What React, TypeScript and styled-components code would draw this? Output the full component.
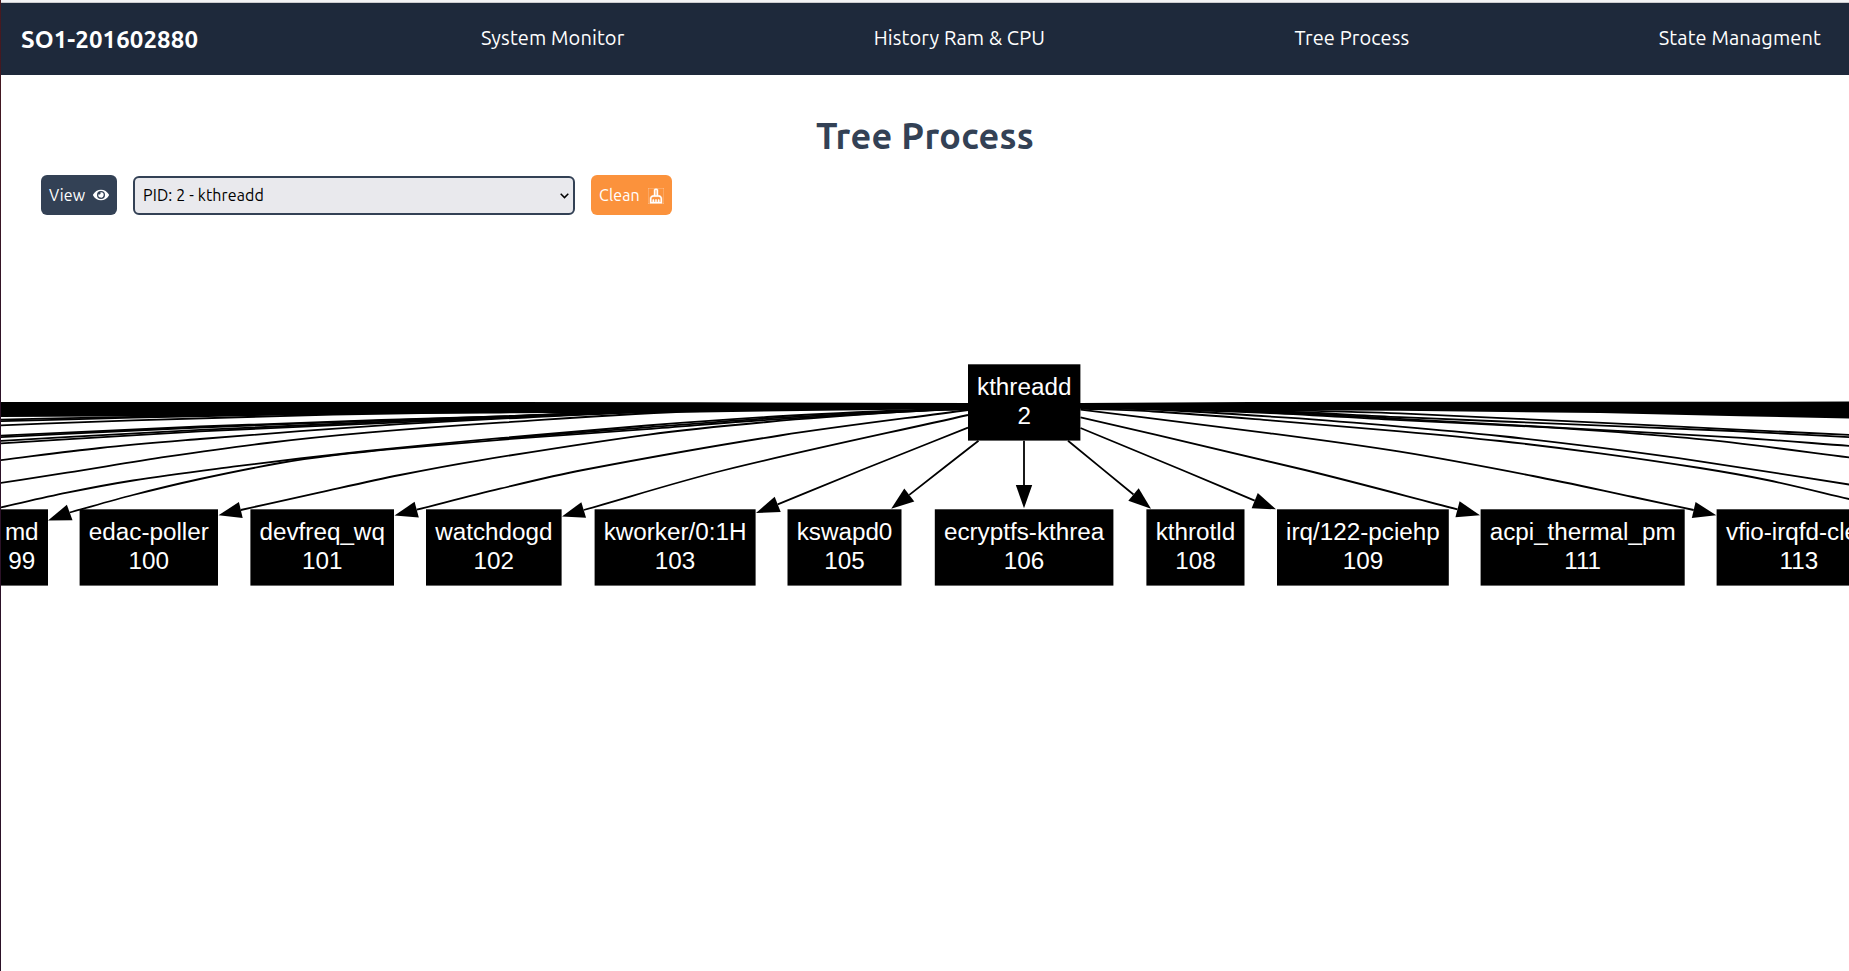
import React from "react";
import styled, { createGlobalStyle } from "styled-components";
import { FaEye } from "react-icons/fa";
import { MdOutlineCleaningServices } from "react-icons/md";

const GlobalStyle = createGlobalStyle`
  * { box-sizing: border-box; }
  body {
    margin: 0;
    overflow: hidden;
    background: #fff;
    font-family: Ubuntu, "Noto Sans", "Open Sans", sans-serif;
    font-size: 16px;
    line-height: 24px;
  }
`;

const Frame = styled.div`
  display: grid;
  grid-template-columns: 1px 1fr;
  width: 100vw;
  height: 100vh;
  overflow: hidden;
`;

const WindowEdge = styled.div`
  background: linear-gradient(#4a1a20, #2c1228 40%);
`;

const Page = styled.div`
  display: flex;
  flex-direction: column;
  min-width: 0;
  border-top: 2px solid #f3f3f5;
`;

const NavBar = styled.nav`
  display: flex;
  justify-content: space-between;
  align-items: flex-start;
  flex: none;
  height: 73px;
  padding: 21px 28px 19px 20px;
  border-top: 1px solid #cccccf;
  background: #1e293b;
  color: #fff;
`;

const Brand = styled.span`
  font-size: 24px;
  line-height: 32px;
  font-weight: 700;
  letter-spacing: 0.1px;
`;

const NavList = styled.ul`
  display: flex;
  justify-content: space-between;
  width: 1340px;
  margin: 0;
  padding: 0;
  list-style: none;
`;

const NavLink = styled.a`
  color: #fff;
  font-size: 20px;
  line-height: 28px;
  letter-spacing: 0.12px;
  text-decoration: none;
`;

const Title = styled.h1`
  margin: 41px 0 19px;
  text-align: center;
  color: #334155;
  font-size: 36px;
  line-height: 40px;
  font-weight: 700;
  letter-spacing: 0.3px;
`;

const Toolbar = styled.div`
  display: flex;
  align-items: flex-end;
  gap: 16px;
  padding-left: 40px;
`;

const Button = styled.button<{ $color: string; $width: number }>`
  display: flex;
  align-items: center;
  justify-content: space-between;
  width: ${(p) => p.$width}px;
  height: 40px;
  padding: 8px;
  border: 0;
  border-radius: 6px;
  background: ${(p) => p.$color};
  color: #fff;
  font: inherit;
  letter-spacing: 0.1px;
`;

const BrushIcon = styled(MdOutlineCleaningServices)`
  margin-top: 1px;
  stroke-width: 0.6px;
`;

const SelectBox = styled.div`
  display: grid;
  align-items: center;
  width: 442px;
  height: 39px;

  > * { grid-area: 1 / 1; }
`;

const Select = styled.select`
  appearance: none;
  width: 100%;
  height: 100%;
  padding: 0 8px 2px;
  border: 2px solid #334155;
  border-radius: 6px;
  background: #e9e9ed;
  color: #000;
  font: inherit;
  letter-spacing: 0.13px;
`;

const Chevron = styled.svg`
  justify-self: end;
  margin-right: 6px;
  pointer-events: none;
`;

const Graph = styled.svg`
  display: block;
  flex: none;
  margin-top: 85px;

  text {
    font-family: "Liberation Sans", Arial, Helvetica, sans-serif;
    font-size: 24.25px;
    fill: #fff;
    text-anchor: middle;
  }
`;

type Point = [number, number];

type ProcessNode = { name: string; pid: number; left: number; right: number; top: number };

const nodes: ProcessNode[] = [
  { name: "kthreadd", pid: 2, left: 968, right: 1080.4, top: 364.3 },
  { name: "md", pid: 99, left: -4.5, right: 48, top: 509.3 },
  { name: "edac-poller", pid: 100, left: 79.6, right: 218, top: 509.3 },
  { name: "devfreq_wq", pid: 101, left: 250.4, right: 394, top: 509.3 },
  { name: "watchdogd", pid: 102, left: 426, right: 561.6, top: 509.3 },
  { name: "kworker/0:1H", pid: 103, left: 594.6, right: 755.6, top: 509.3 },
  { name: "kswapd0", pid: 105, left: 787.5, right: 901.5, top: 509.3 },
  { name: "ecryptfs-kthrea", pid: 106, left: 934.8, right: 1113.4, top: 509.3 },
  { name: "kthrotld", pid: 108, left: 1146.4, right: 1244.5, top: 509.3 },
  { name: "irq/122-pciehp", pid: 109, left: 1277, right: 1448.8, top: 509.3 },
  { name: "acpi_thermal_pm", pid: 111, left: 1480.6, right: 1684.7, top: 509.3 },
  { name: "vfio-irqfd-clea", pid: 113, left: 1716.6, right: 1881, top: 509.3 },
];

// Edges that end in a visible node; the last point is where the arrow head starts.
const arrows: { path: Point[]; tip: Point }[] = [
  { path: [[968, 408.5], [897, 412], [767, 419.8], [647, 429.2], [500, 439.8], [400, 448.3], [333, 455.3], [280, 463], [200, 479], [133, 495], [69.7, 512.5]], tip: [48, 520.5] },
  { path: [[968, 409], [897, 412.2], [767, 422], [647, 434.8], [480, 460.3], [400, 475], [320, 492.3], [240.8, 510]], tip: [218.5, 515.3] },
  { path: [[968, 410], [780, 435.5], [583, 470], [500, 488.7], [416.7, 509.7]], tip: [394.5, 515.6] },
  { path: [[968, 415], [725, 470], [583.7, 510]], tip: [562, 516.5] },
  { path: [[968, 427.7], [861.7, 470], [777.7, 504.4]], tip: [756, 513] },
  { path: [[978.5, 440.7], [909.3, 494.9]], tip: [891.2, 508.8] },
  { path: [[1024, 440.7], [1024, 485]], tip: [1024, 508.3] },
  { path: [[1068, 440.7], [1133.5, 494.5]], tip: [1151, 508.8] },
  { path: [[1080.5, 428], [1182, 470], [1254.7, 500.7]], tip: [1276, 509.3] },
  { path: [[1080.5, 417.3], [1305, 470], [1457.5, 509.3]], tip: [1480, 515.2] },
  { path: [[1080.5, 409.7], [1270, 433.3], [1400, 451.7], [1533, 476], [1633, 497], [1693.7, 510]], tip: [1716.3, 515.3] },
];

// Edges that continue past either side of the viewport.
const offscreen: Point[][] = [
  [[968, 408], [897, 410.5], [767, 417], [647, 425.5], [500, 438.2], [433, 444.3], [367, 451], [300, 458.5], [233, 466.7], [133, 480.5], [67, 492.7], [-2, 508]],
  [[968, 408], [897, 411.3], [767, 418.4], [647, 427.3], [500, 438.8]],
  [[968, 408], [700, 411], [500, 422.7], [367, 432.7], [267, 443], [167, 456.7], [67, 472.7], [-2, 483.3]],
  [[968, 407], [700, 410], [500, 418.7], [400, 424.2], [300, 431.2], [200, 439], [100, 448], [-2, 460.5]],
  [[968, 407], [700, 410], [500, 417.9], [400, 422.4], [200, 431.3], [-2, 443.6]],
  [[968, 407], [700, 410], [500, 417.2], [400, 421.2], [200, 429.9], [-2, 441]],
  [[968, 407], [700, 409], [500, 416.5], [400, 420], [200, 427.5], [-2, 437.2]],
  [[968, 406], [700, 409], [500, 416.3], [400, 419.3], [200, 426.5], [-2, 435.7]],
  [[968, 406], [600, 410], [333, 414.5], [133, 420.3], [-2, 425.4]],
  [[968, 406], [600, 409], [333, 413.5], [133, 417.6], [-2, 421.3]],
  [[968, 406], [600, 409], [333, 413], [133, 416.8], [-2, 419.6]],
  [[1080.5, 408.5], [1153, 411.5], [1270, 420.3], [1400, 431.3], [1500, 441], [1600, 453.3], [1700, 468], [1767, 480], [1851, 499.5]],
  [[1080.5, 408], [1153, 409.5], [1287, 417.7], [1400, 426.6], [1500, 436], [1600, 447.7], [1700, 461.3], [1851, 484.8]],
  [[1080.5, 407], [1270, 413], [1400, 420.2], [1533, 426.6], [1600, 430.9], [1667, 436.2], [1733, 442.7], [1851, 457.6]],
  [[1080.5, 407], [1270, 412], [1400, 418.8], [1567, 428.2], [1733, 437.3], [1851, 446]],
  [[1080.5, 407], [1270, 411], [1400, 417.2], [1567, 424.1], [1733, 431], [1851, 437.2]],
  [[1080.5, 406], [1270, 410], [1400, 413.4], [1567, 421.2], [1733, 429.3], [1851, 435]],
];

// Dense bundles where dozens of edges overlap on each side of the root.
const bundles = [
  "M968 403 L700 402.2 L0 401.9 L0 417 L160 416.2 L333 414 L500 413.4 L700 412.4 L880 410 L968 408.3Z",
  "M1080 403 L1250 402 L1849 401.6 L1849 418.6 L1740 416.2 L1600 413 L1400 410.8 L1230 410 L1080 408.3Z",
];

function smooth(points: Point[]): string {
  const slope = (a: Point, b: Point) => (b[0] === a[0] ? 0 : (b[1] - a[1]) / (b[0] - a[0]));
  const last = points.length - 1;
  const tangent = (i: number) => slope(points[Math.max(0, i - 1)], points[Math.min(last, i + 1)]);
  let d = `M${points[0][0]} ${points[0][1]}`;
  for (let i = 0; i < last; i++) {
    const [a, b] = [points[i], points[i + 1]];
    const third = (b[0] - a[0]) / 3;
    d +=
      third === 0
        ? ` L${b[0]} ${b[1]}`
        : ` C${a[0] + third} ${a[1] + tangent(i) * third} ${b[0] - third} ${b[1] - tangent(i + 1) * third} ${b[0]} ${b[1]}`;
  }
  return d;
}

function arrowHead([bx, by]: Point, [tx, ty]: Point): string {
  const length = Math.hypot(tx - bx, ty - by);
  const nx = (-(ty - by) / length) * 8.2;
  const ny = ((tx - bx) / length) * 8.2;
  return `${bx + nx},${by + ny} ${tx},${ty} ${bx - nx},${by - ny}`;
}

function ProcessTree() {
  return (
    <Graph width="1848" height="671" viewBox="1 300 1848 671">
      <g fill="none" stroke="#000" strokeWidth="1.8">
        {offscreen.map((points, i) => (
          <path key={i} d={smooth(points)} />
        ))}
        {arrows.map(({ path }, i) => (
          <path key={i} d={smooth(path)} />
        ))}
      </g>
      {bundles.map((d) => (
        <path key={d} d={d} />
      ))}
      {arrows.map(({ path, tip }, i) => (
        <polygon key={i} points={arrowHead(path[path.length - 1], tip)} />
      ))}
      {nodes.map(({ name, pid, left, right, top }) => (
        <g key={pid}>
          <rect x={left} y={top} width={right - left} height={76.3} />
          <text x={(left + right) / 2} y={top + 30.5}>{name}</text>
          <text x={(left + right) / 2} y={top + 59.7}>{pid}</text>
        </g>
      ))}
    </Graph>
  );
}

const links = ["System Monitor", "History Ram & CPU", "Tree Process", "State Managment"];

export default function App() {
  return (
    <Frame>
      <GlobalStyle />
      <WindowEdge />
      <Page>
        <NavBar>
          <Brand>SO1-201602880</Brand>
          <NavList>
            {links.map((label) => (
              <li key={label}>
                <NavLink>{label}</NavLink>
              </li>
            ))}
          </NavList>
        </NavBar>
        <Title>Tree Process</Title>
        <Toolbar>
          <Button $color="#334155" $width={76}>
            View <FaEye size={16} />
          </Button>
          <SelectBox>
            <Select defaultValue="2">
              <option value="2">PID: 2 - kthreadd</option>
            </Select>
            <Chevron width="9" height="6" viewBox="0 0 9 6" fill="none" stroke="#000" strokeWidth="1.5">
              <path d="M0.7 0.8 4.5 4.6 8.3 0.8" />
            </Chevron>
          </SelectBox>
          <Button $color="#fb923c" $width={81}>
            Clean <BrushIcon size={16} />
          </Button>
        </Toolbar>
        <ProcessTree />
      </Page>
    </Frame>
  );
}
